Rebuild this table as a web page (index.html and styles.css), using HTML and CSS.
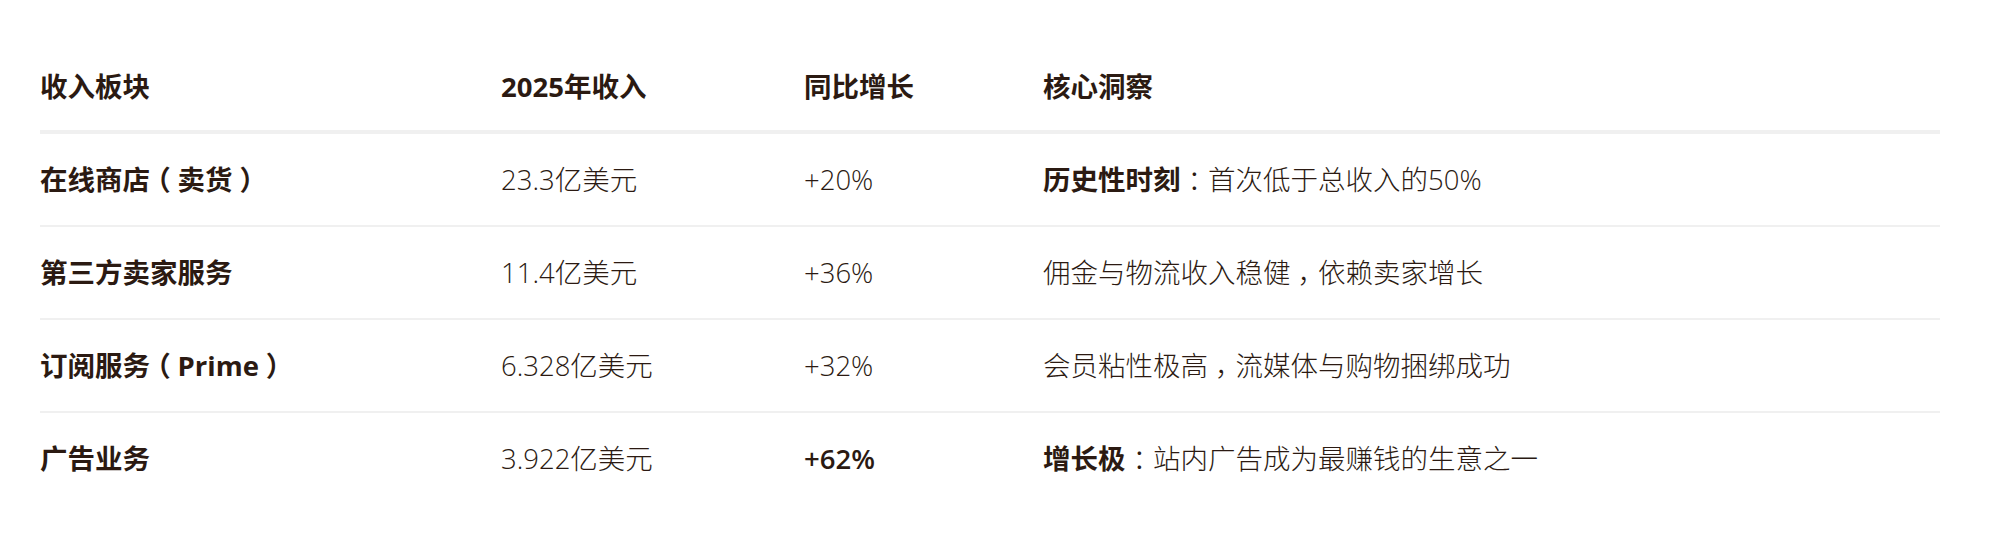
FILE: index.html
```html
<!DOCTYPE html>
<html lang="zh-CN">
<head>
<meta charset="utf-8">
<title>收入板块</title>
<link rel="stylesheet" href="styles.css">
</head>
<body>
<div class="wrap">
  <table class="rev">
    <colgroup>
      <col class="c1"><col class="c2"><col class="c3"><col class="c4">
    </colgroup>
    <thead>
      <tr>
        <th>收入板块</th>
        <th>2025年收入</th>
        <th>同比增长</th>
        <th>核心洞察</th>
      </tr>
    </thead>
    <tbody>
      <tr>
        <td class="name">在线商店<span class="p">（</span>卖货<span class="p">）</span></td>
        <td>23.3亿美元</td>
        <td>+20%</td>
        <td><strong>历史性时刻</strong><span class="p">：</span>首次低于总收入的50%</td>
      </tr>
      <tr>
        <td class="name">第三方卖家服务</td>
        <td>11.4亿美元</td>
        <td>+36%</td>
        <td>佣金与物流收入稳健<span class="p">，</span>依赖卖家增长</td>
      </tr>
      <tr>
        <td class="name">订阅服务<span class="p">（</span>Prime<span class="p">）</span></td>
        <td>6.328亿美元</td>
        <td>+32%</td>
        <td>会员粘性极高<span class="p">，</span>流媒体与购物捆绑成功</td>
      </tr>
      <tr>
        <td class="name">广告业务</td>
        <td>3.922亿美元</td>
        <td class="hi">+62%</td>
        <td><strong>增长极</strong><span class="p">：</span>站内广告成为最赚钱的生意之一</td>
      </tr>
    </tbody>
  </table>
</div>
</body>
</html>
```

FILE: styles.css
```css
html, body {
  margin: 0;
  padding: 0;
  background: #ffffff;
}

body {
  font-family: "Open Sans", "Noto Sans CJK SC", sans-serif;
  color: #2b1a12;
  font-size: 27.5px;
  text-spacing-trim: space-all;
}

.wrap {
  padding: 43px 60px 0 40px;
}

.rev {
  width: 1900px;
  border-collapse: collapse;
  table-layout: fixed;
}

.c1 { width: 461px; }
.c2 { width: 303px; }
.c3 { width: 239px; }

.rev th,
.rev td {
  text-align: left;
  vertical-align: middle;
  padding: 0;
  line-height: 38px;
  white-space: nowrap;
}

.rev th {
  font-weight: 700;
  padding-top: 25px;
  padding-bottom: 24px;
  border-bottom: 4px solid #f0f0f0;
}

.rev td {
  font-weight: 300;
  padding-top: 26.5px;
  padding-bottom: 26.5px;
  border-bottom: 2px solid #f0f0f0;
}

.rev tbody tr:last-child td {
  border-bottom: none;
}

.rev td.name {
  font-weight: 700;
}

.rev td.hi {
  font-weight: 600;
}

.rev strong {
  font-weight: 700;
}

.p {
  display: inline-block;
  width: 1em;
  text-align: center;
  font-feature-settings: "halt";
  font-weight: 300;
}

.name .p {
  font-weight: 700;
}
```
